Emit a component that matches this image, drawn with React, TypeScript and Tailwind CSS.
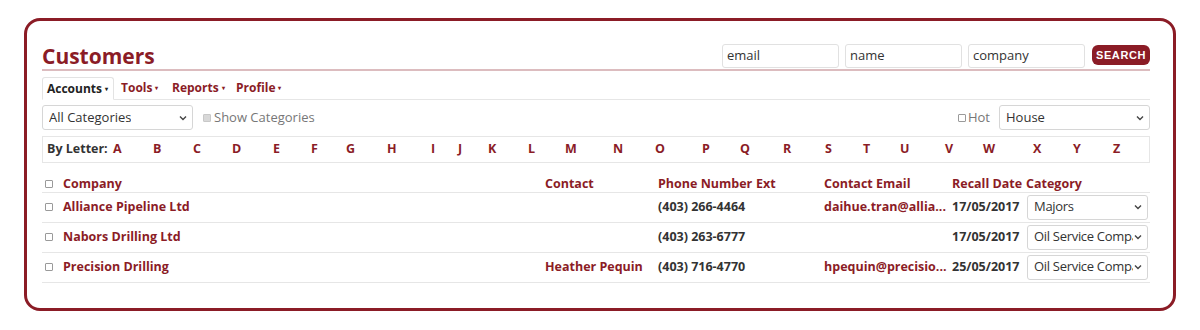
import type { ReactNode } from "react";

const RED = "text-[#8b1c26]";

const letters: { ch: string; w: string }[] = [
  { ch: "A", w: "w-[40px]" },
  { ch: "B", w: "w-[40px]" },
  { ch: "C", w: "w-[39px]" },
  { ch: "D", w: "w-[41px]" },
  { ch: "E", w: "w-[38px]" },
  { ch: "F", w: "w-[35px]" },
  { ch: "G", w: "w-[41px]" },
  { ch: "H", w: "w-[44px]" },
  { ch: "I", w: "w-[27px]" },
  { ch: "J", w: "w-[30px]" },
  { ch: "K", w: "w-[40px]" },
  { ch: "L", w: "w-[37px]" },
  { ch: "M", w: "w-[48px]" },
  { ch: "N", w: "w-[42px]" },
  { ch: "O", w: "w-[47px]" },
  { ch: "P", w: "w-[38px]" },
  { ch: "Q", w: "w-[43px]" },
  { ch: "R", w: "w-[42px]" },
  { ch: "S", w: "w-[38px]" },
  { ch: "T", w: "w-[37px]" },
  { ch: "U", w: "w-[45px]" },
  { ch: "V", w: "w-[38px]" },
  { ch: "W", w: "w-[50px]" },
  { ch: "X", w: "w-[40px]" },
  { ch: "Y", w: "w-[40px]" },
  { ch: "Z", w: "w-[20px]" },
];

const rows = [
  {
    company: "Alliance Pipeline Ltd",
    contact: "",
    phone: "(403) 266-4464",
    email: "daihue.tran@allia...",
    date: "17/05/2017",
    category: "Majors",
  },
  {
    company: "Nabors Drilling Ltd",
    contact: "",
    phone: "(403) 263-6777",
    email: "",
    date: "17/05/2017",
    category: "Oil Service Compa",
  },
  {
    company: "Precision Drilling",
    contact: "Heather Pequin",
    phone: "(403) 716-4770",
    email: "hpequin@precisio...",
    date: "25/05/2017",
    category: "Oil Service Compa",
  },
];

function Caret() {
  return <span className="ml-[3px] inline-block align-middle text-[6px] leading-none">▾</span>;
}

function Box() {
  return <span className="inline-block h-[8px] w-[8px] rounded-[1px] border border-[#9a9a9a] bg-white" />;
}

function FakeSelect({ label, className = "" }: { label: string; className?: string }) {
  return (
    <div
      className={`flex items-center justify-between overflow-hidden rounded-[3px] border border-[#d6d6d6] bg-white pl-[6px] pr-[5px] text-[13px] text-[#333] ${className}`}
    >
      <span className="min-w-0 overflow-hidden whitespace-nowrap">{label}</span>
      <svg width="8" height="6" viewBox="0 0 8 6" className="ml-[1px] shrink-0">
        <path d="M1 1.5 L4 4.5 L7 1.5" fill="none" stroke="#444" strokeWidth="1.4" />
      </svg>
    </div>
  );
}

function Th({ children }: { children?: ReactNode }) {
  return <th className={`p-0 text-left align-bottom font-bold leading-[16px] ${RED}`}>{children}</th>;
}

export default function App() {
  return (
    <div className="bg-white pl-[24px] pt-[18px] font-['Open_Sans',sans-serif]">
      <div className="h-[293px] w-[1152px] rounded-[16px] border-[3px] border-[#8b1c26] pb-[26px] pl-[15px] pr-[23px] pt-[23px]">
        {/* title + search */}
        <div className="flex items-end justify-between border-b-2 border-[#dcbcbf]">
          <h1 className={`text-[21px] font-bold leading-[25px] ${RED}`}>Customers</h1>
          <div className="mb-[1px] flex items-center gap-[6px]">
            <div className="flex h-[24px] w-[117px] items-center rounded-[3px] border border-[#e1e1e1] pl-[4px] text-[13px] text-[#333]">
              email
            </div>
            <div className="flex h-[24px] w-[117px] items-center rounded-[3px] border border-[#e1e1e1] pl-[4px] text-[13px] text-[#333]">
              name
            </div>
            <div className="flex h-[24px] w-[117px] items-center rounded-[3px] border border-[#e1e1e1] pl-[4px] text-[13px] text-[#333]">
              company
            </div>
            <button
              type="button"
              className="mb-[2px] ml-[1px] h-[20px] w-[58px] rounded-[6px] bg-[#8b1c26] font-['Liberation_Sans',sans-serif] text-[11px] font-bold tracking-[0.6px] text-white"
            >
              SEARCH
            </button>
          </div>
        </div>

        {/* nav */}
        <div className="mt-[5px] flex items-end border-b border-[#e6e6e6] text-[12px] font-bold">
          <div className="-mb-px flex h-[23px] w-[72px] items-center rounded-t-[3px] border border-[#e3e3e3] border-b-white bg-white pl-[4px] text-[#222]">
            Accounts
            <Caret />
          </div>
          <div className={`flex h-[23px] w-[51px] items-center pl-[7px] ${RED}`}>
            Tools
            <Caret />
          </div>
          <div className={`flex h-[23px] w-[64px] items-center pl-[7px] ${RED}`}>
            Reports
            <Caret />
          </div>
          <div className={`flex h-[23px] items-center pl-[7px] ${RED}`}>
            Profile
            <Caret />
          </div>
        </div>

        {/* filters */}
        <div className="mt-[5px] flex items-center justify-between">
          <div className="flex items-center">
            <FakeSelect label="All Categories" className="h-[25px] w-[151px]" />
            <span className="ml-[10px] inline-block h-[8px] w-[8px] rounded-[1px] border border-[#c8c8c8] bg-[#d8d8d8]" />
            <span className="ml-[3px] text-[13px] text-[#777]">Show Categories</span>
          </div>
          <div className="flex items-center">
            <Box />
            <span className="ml-[2px] text-[13px] text-[#777]">Hot</span>
            <FakeSelect label="House" className="ml-[9px] h-[25px] w-[151px]" />
          </div>
        </div>

        {/* by letter */}
        <div className="mt-[6px] flex h-[27px] items-center border border-[#e6e6e6] pl-[4px] text-[12.5px] font-bold">
          <span className="w-[66px] text-[#333]">By Letter:</span>
          {letters.map((l) => (
            <span key={l.ch} className={`${l.w} ${RED}`}>
              {l.ch}
            </span>
          ))}
        </div>

        {/* table */}
        <table className="mt-[9px] w-full table-fixed border-collapse text-[12.5px]">
          <colgroup>
            <col className="w-[21px]" />
            <col className="w-[482px]" />
            <col className="w-[113px]" />
            <col className="w-[98px]" />
            <col className="w-[68px]" />
            <col className="w-[128px]" />
            <col className="w-[74px]" />
            <col />
          </colgroup>
          <thead>
            <tr className="h-[20px] border-b border-[#e6e6e6]">
              <th className="p-0 pl-[3px] text-left align-bottom">
                <div className="flex h-[16px] items-center">
                  <Box />
                </div>
              </th>
              <Th>Company</Th>
              <Th>Contact</Th>
              <Th>Phone Number</Th>
              <Th>Ext</Th>
              <Th>Contact Email</Th>
              <Th>Recall Date</Th>
              <Th>Category</Th>
            </tr>
          </thead>
          <tbody>
            {rows.map((r) => (
              <tr key={r.company} className="h-[30px] border-b border-[#e6e6e6] font-bold">
                <td className="p-0 pl-[3px] align-middle">
                  <div className="flex items-center">
                    <Box />
                  </div>
                </td>
                <td className={`p-0 ${RED}`}>{r.company}</td>
                <td className={`whitespace-nowrap p-0 ${RED}`}>{r.contact}</td>
                <td className="whitespace-nowrap p-0 text-[#333]">{r.phone}</td>
                <td className="p-0" />
                <td className={`whitespace-nowrap p-0 ${RED}`}>{r.email}</td>
                <td className="whitespace-nowrap p-0 text-[#333]">{r.date}</td>
                <td className="p-0">
                  <FakeSelect
                    label={r.category}
                    className="ml-px h-[25px] w-[121px] font-normal tracking-[-0.3px]"
                  />
                </td>
              </tr>
            ))}
          </tbody>
        </table>
      </div>
    </div>
  );
}
